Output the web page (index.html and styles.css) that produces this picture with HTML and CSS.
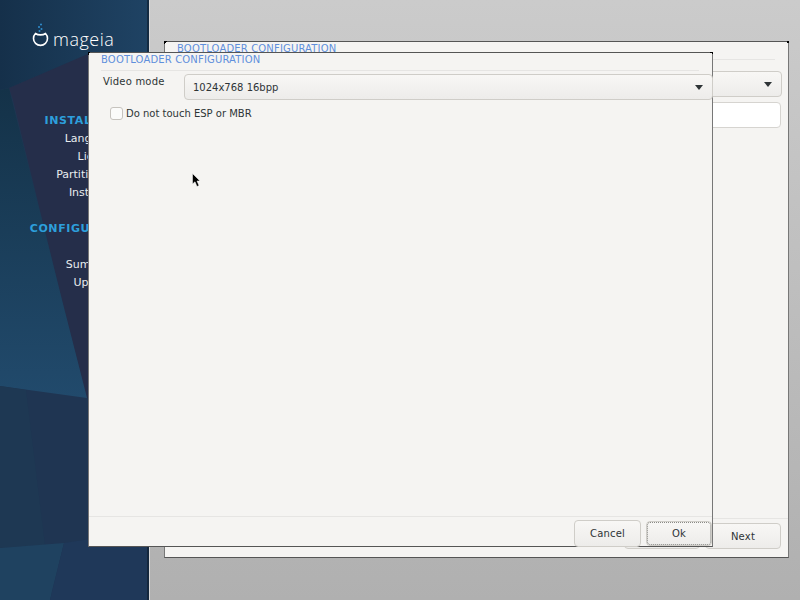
FILE: index.html
```html
<!DOCTYPE html>
<html lang="en">
<head>
  <meta charset="UTF-8">
  <title>Bootloader configuration</title>
  <link rel="stylesheet" href="styles.css">
</head>
<body>

<div class="desktop">

  <!-- Sidebar -->
  <aside class="sidebar">
    <svg class="sidebar-bg" width="149" height="600" viewBox="0 0 149 600">
      <defs>
        <linearGradient id="topBlue" x1="0" y1="0" x2="1" y2="0">
          <stop offset="0" stop-color="#15304a"/>
          <stop offset="1" stop-color="#1f4364"/>
        </linearGradient>
        <linearGradient id="leftBlue" x1="0" y1="0" x2="0" y2="1">
          <stop offset="0" stop-color="#143248"/>
          <stop offset="1" stop-color="#214a6c"/>
        </linearGradient>
      </defs>
      <rect width="149" height="600" fill="#1f3552"/>
      <polygon points="0,0 149,0 149,72 88,54 9,88 0,90" fill="url(#topBlue)"/>
      <polygon points="9,88 88,54 149,72 149,400 87,398 62,300 13,100" fill="#252e4a"/>
      <polygon points="0,90 9,88 62,300 87,398 0,386" fill="url(#leftBlue)"/>
      <polygon points="0,386 26,390 45,545 0,548" fill="#1e3853"/>
      <polygon points="0,548 64,543 50,600 0,600" fill="#1f4260"/>
      <polygon points="64,543 149,530 149,600 50,600" fill="#1f3859"/>
      <rect x="147" width="2" height="600" fill="#0e1c2b" opacity="0.6"/>
    </svg>

    <div class="logo">
      <svg class="logo-mark" width="17" height="25" viewBox="0 0 17 25">
        <circle cx="9" cy="1.5" r="1" fill="#2f8fd0"/>
        <circle cx="7" cy="4" r="1" fill="#2f8fd0"/>
        <circle cx="9.5" cy="6" r="1" fill="#2f8fd0"/>
        <circle cx="7.5" cy="8" r="1" fill="#2f8fd0"/>
        <path d="M3.5 10.5 A7 7 0 1 0 13.5 10.5 C11 12.3 6 12.3 3.5 10.5 Z" fill="none" stroke="#fff" stroke-width="1.6"/>
      </svg>
      <span class="logo-text">mageia</span>
    </div>

    <div class="steps">
      <h4>INSTALLATION</h4>
      <span>Language</span>
      <span>License</span>
      <span>Partitioning</span>
      <span>Installing</span>
    </div>
    <div class="steps">
      <h4>CONFIGURATION</h4>
      <span>Users</span>
      <span>Summary</span>
      <span>Updates</span>
    </div>
  </aside>

  <!-- Window behind -->
  <div class="window window-back">
    <div class="title">BOOTLOADER CONFIGURATION</div>
    <div class="rule"></div>
    <div class="combo combo-back"><i class="arrow"></i></div>
    <div class="entry"></div>
    <div class="spacer"></div>
    <div class="footer">
      <button class="btn btn-back"></button>
      <button class="btn btn-back">Next</button>
    </div>
  </div>

  <!-- Dialog -->
  <div class="window window-front">
    <div class="title">BOOTLOADER CONFIGURATION</div>
    <div class="rule"></div>
    <div class="row">
      <label>Video mode</label>
      <div class="combo">1024x768 16bpp<i class="arrow"></i></div>
    </div>
    <div class="check-row"><span class="checkbox"></span><span class="check-label">Do not touch ESP or MBR</span></div>
    <div class="spacer"></div>
    <div class="footer">
      <button class="btn btn-cancel">Cancel</button>
      <button class="btn btn-ok">Ok</button>
    </div>
  </div>

  <svg class="cursor" width="10" height="15" viewBox="0 0 10 15">
    <path d="M0.5 0.5 L0.5 11 L3 8.8 L5 13.5 L7 12.6 L5 8 L8 8 Z" fill="#000" stroke="#fff" stroke-width="0.5"/>
  </svg>
</div>

</body>
</html>
```

FILE: styles.css
```css
html, body { margin: 0; padding: 0; }
body { font-family: "DejaVu Sans", sans-serif; font-size: 10px; color: #2e3436; }

.desktop { position: relative; width: 800px; height: 600px; overflow: hidden; background: linear-gradient(#cbcbcb, #b0b0b0); }

/* Sidebar */
.sidebar { position: relative; width: 149px; height: 600px; border-right: 1px solid #d8d8d8; }
.sidebar-bg { position: absolute; left: 0; top: 0; }
.logo { position: relative; display: flex; align-items: flex-end; gap: 4px; padding: 23px 0 0 32px; height: 25px; }
.logo-text { font-family: "Open Sans", sans-serif; font-weight: 300; font-size: 18px; line-height: 24px; margin-bottom: -3px; color: #fff; letter-spacing: 0.5px; }
.steps { position: relative; display: flex; flex-direction: column; align-items: flex-end; padding-right: 30px; margin-bottom: 18px; font-size: 11px; color: #e8ecef; line-height: 18px; }
.logo + .steps { margin-top: 64px; }
.steps h4 { margin: 0 -21px 0 0; font-size: 11px; letter-spacing: 0.6px; color: #2d9fdc; font-weight: bold; }

/* Windows */
.window { position: absolute; box-sizing: border-box; display: flex; flex-direction: column; width: 625px; background: #f5f4f2; border: 1px solid #777; border-top-color: #555; border-bottom-color: #555; }
.window::before, .window::after { content: ""; position: absolute; top: -1px; width: 3px; height: 3px; }
.window::before { left: -1px; background: linear-gradient(135deg, #000 50%, transparent 50%); }
.window::after { right: -1px; background: linear-gradient(225deg, #000 50%, transparent 50%); }
.window-back { left: 164px; top: 41px; height: 517px; }
.window-front { left: 88px; top: 52px; height: 495px; }

.title { padding: 1px 0 0 12px; line-height: 12px; color: #5f8fdc; letter-spacing: 0.16px; }
.rule { height: 1px; margin: 4px 13px 0 12px; background: #e6e5e3; }
.spacer { flex: 1; }

.row { display: flex; align-items: flex-start; padding-left: 14px; margin-top: 3px; }
.row label { width: 81px; padding-top: 2px; line-height: 12px; letter-spacing: 0.2px; }

.combo { position: relative; flex: 1; box-sizing: border-box; height: 26px; margin-right: -1px; padding-left: 8px; line-height: 26px; background: linear-gradient(#f8f7f5, #edecea); border: 1px solid #cfcdc8; border-radius: 4px; }
.arrow { position: absolute; right: 9px; top: 10px; width: 0; height: 0; border-left: 4.5px solid transparent; border-right: 4.5px solid transparent; border-top: 5px solid #2e3436; }

.check-row { display: flex; align-items: center; gap: 3px; padding-left: 21px; margin-top: 6px; line-height: 13px; }
.check-label { padding-top: 1px; }
.checkbox { width: 11px; height: 11px; background: #fbfbfa; border: 1px solid #c6c3be; border-radius: 3px; }

.combo-back { flex: none; margin: 11px 7px 0 auto; width: 617px; }
.entry { height: 26px; margin: 5px 7px 0 auto; width: 616px; box-sizing: border-box; background: #fff; border: 1px solid #d6d4d0; border-radius: 4px; }

.footer { display: flex; justify-content: flex-end; box-sizing: border-box; border-top: 1px solid #e6e5e3; }
.btn { font: inherit; letter-spacing: 0.2px; color: #2e3436; box-sizing: border-box; background: linear-gradient(#f8f7f5, #edecea); border: 1px solid #cfcdc8; border-radius: 4px; padding: 0; }
.window-back .footer { gap: 5px; padding: 4px 7px 0 0; height: 39px; margin-left: 12px; }
.btn-back { width: 76px; height: 26px; }
.window-front .footer { gap: 5px; padding-top: 3px; height: 30px; }
.btn-cancel { width: 67px; height: 27px; position: relative; }
.btn-ok { width: 66px; height: 25px; margin-top: 1px; outline: 1px dotted #8a8a86; outline-offset: -2px; }

.cursor { position: absolute; left: 192px; top: 173px; }
```
